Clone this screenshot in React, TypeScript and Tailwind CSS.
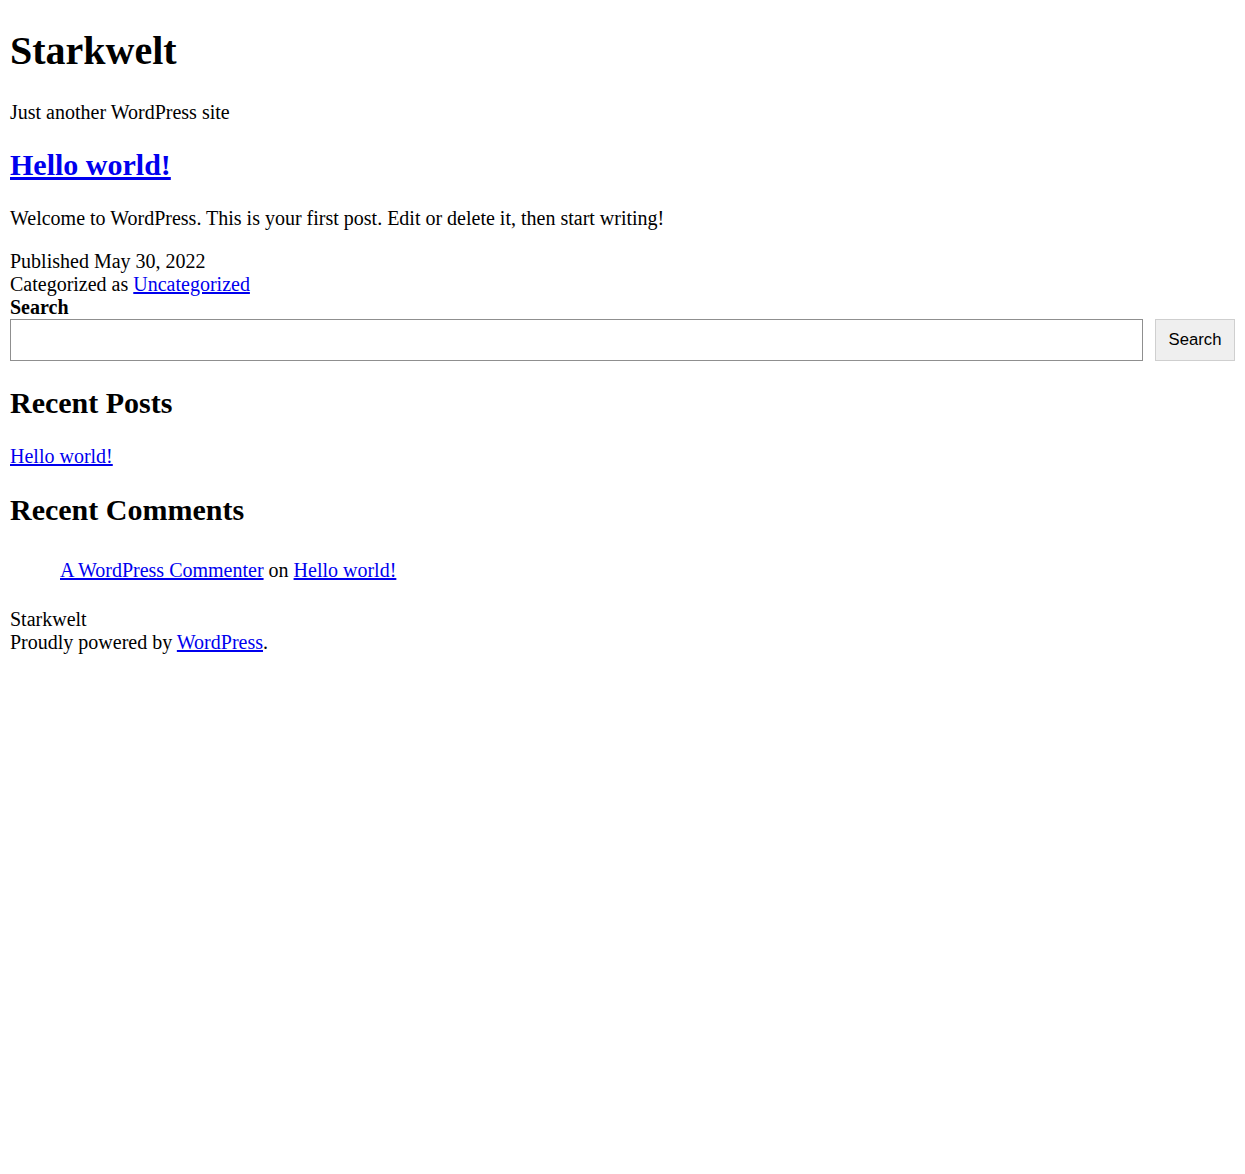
export default function App() {
  return (
    <div className="min-h-screen bg-white px-[10px] text-[20px] leading-[23px] text-black [font-family:'Liberation_Serif',serif]">
      {/* Header */}
      <h1 className="pt-[28px] text-[40px] font-bold leading-[46px]">Starkwelt</h1>
      <p className="mt-[27px]">Just another WordPress site</p>

      {/* Post */}
      <h2 className="mt-[24px] text-[30px] font-bold leading-[34px]">
        <a href="#" className="text-[#0000ee] underline">Hello world!</a>
      </h2>
      <p className="mt-[25px]">
        Welcome to WordPress. This is your first post. Edit or delete it, then start writing!
      </p>
      <div className="mt-[20px]">
        <div>Published May 30, 2022</div>
        <div>
          Categorized as{' '}
          <a href="#" className="text-[#0000ee] underline">Uncategorized</a>
        </div>
      </div>

      {/* Search widget */}
      <form onSubmit={(e) => e.preventDefault()}>
        <label className="block font-bold">Search</label>
        <div className="flex">
          <input
            type="text"
            className="h-[42px] flex-1 border border-[#8f8f8f] bg-white px-[10px] outline-none"
          />
          <button
            type="submit"
            className="ml-[12px] h-[42px] w-[80px] border border-[#cfcfcf] bg-[#efefef] pb-[2px] text-[16.7px] [font-family:'Liberation_Sans',Arial,sans-serif]"
          >
            Search
          </button>
        </div>
      </form>

      {/* Recent posts */}
      <h2 className="mt-[25px] text-[30px] font-bold leading-[34px]">Recent Posts</h2>
      <ul className="mt-[25px]">
        <li>
          <a href="#" className="text-[#0000ee] underline">Hello world!</a>
        </li>
      </ul>

      {/* Recent comments */}
      <h2 className="mt-[25px] text-[30px] font-bold leading-[34px]">Recent Comments</h2>
      <ol className="mt-[32px] pl-[50px]">
        <li>
          <a href="#" className="text-[#0000ee] underline">A WordPress Commenter</a> on{' '}
          <a href="#" className="text-[#0000ee] underline">Hello world!</a>
        </li>
      </ol>

      {/* Footer */}
      <footer className="mt-[26px]">
        <div>Starkwelt</div>
        <div>
          Proudly powered by{' '}
          <a href="#" className="text-[#0000ee] underline">WordPress</a>.
        </div>
      </footer>
    </div>
  );
}
